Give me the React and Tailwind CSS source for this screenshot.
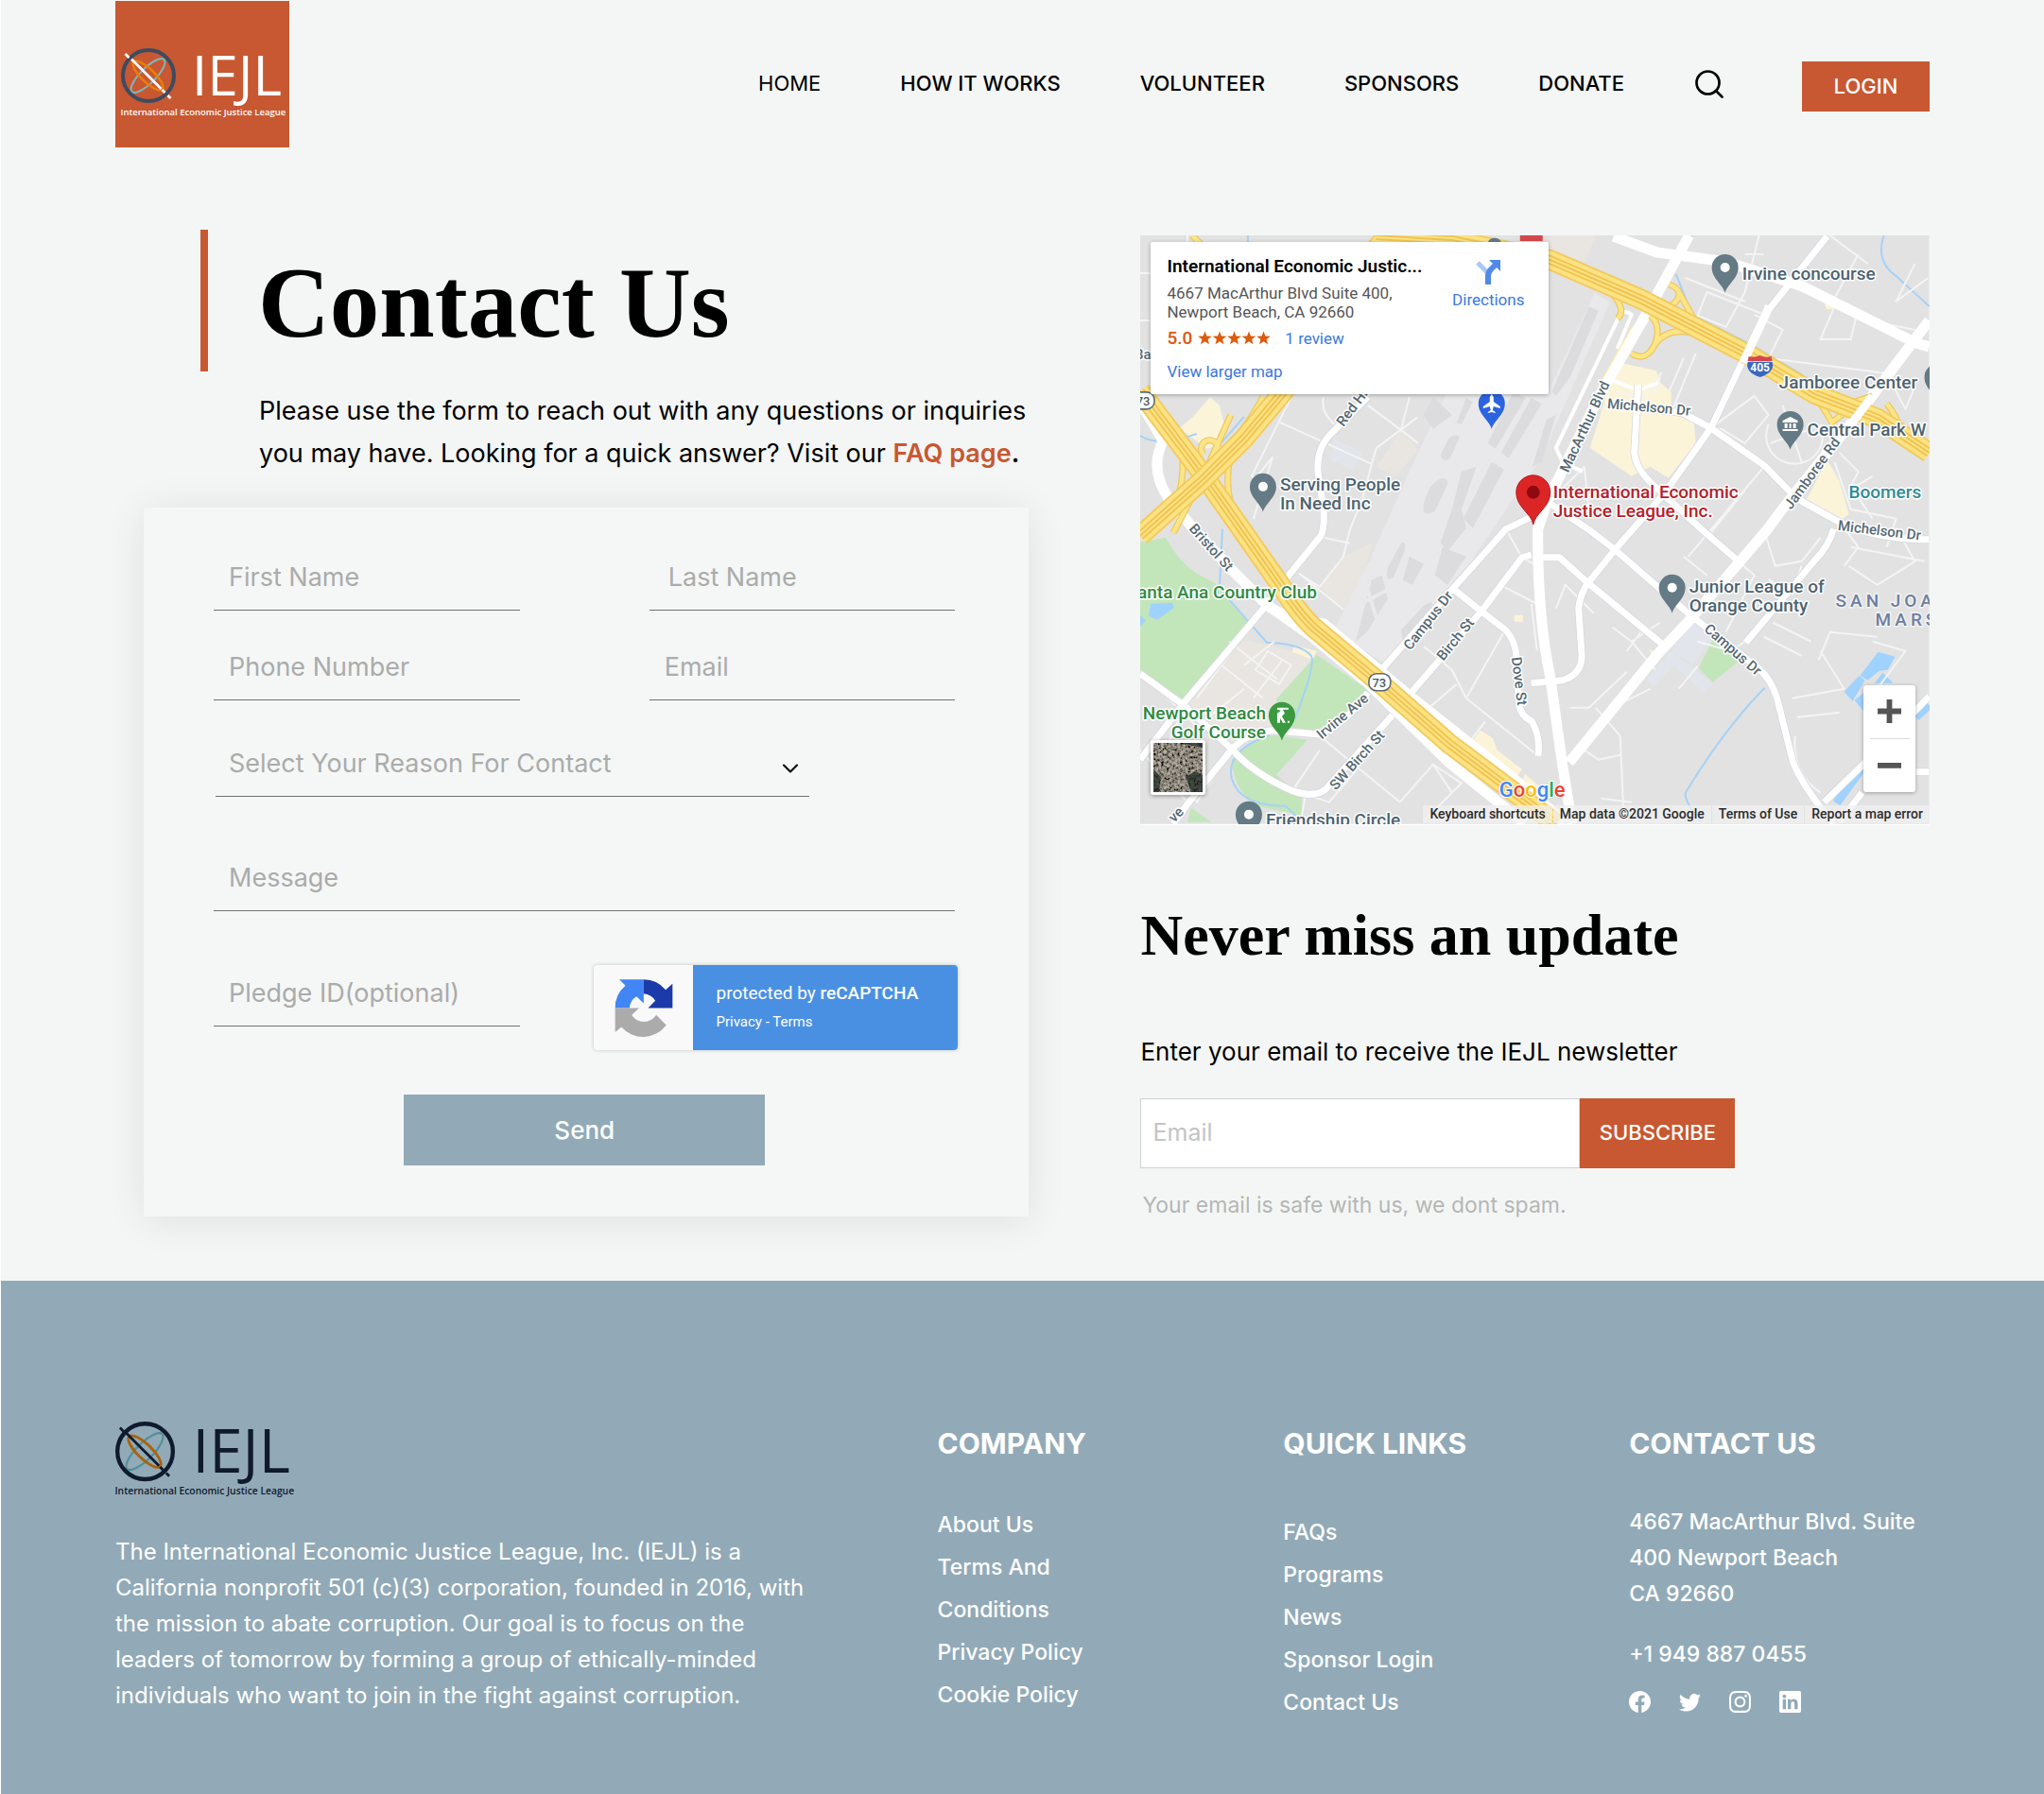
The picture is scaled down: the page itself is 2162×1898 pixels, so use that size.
import React from "react";
import { Search, ChevronDown } from "lucide-react";
import { BsFacebook, BsTwitter, BsInstagram, BsLinkedin } from "react-icons/bs";

const LIGHT_LOGO = { ring: "#3f4a5f", text: "#ffffff", bar: "#ffffff", orange: "#ea7c0c", teal: "#7fb6bf" };
const DARK_LOGO = { ring: "#101a2e", text: "#101a2e", bar: "#101a2e", orange: "#a8640a", teal: "#528f9b" };

function Logo({ colors, className }) {
  return (
    <svg viewBox="3 0 344 152" className={"overflow-visible " + className} role="img" aria-label="IEJL">
      <g fill="none" transform="scale(2)">
        <ellipse cx="30" cy="30" rx="24" ry="8" transform="rotate(-45 30 30)" stroke={colors.teal} strokeWidth="2" />
        <ellipse cx="30" cy="30" rx="21" ry="7" transform="rotate(44 30 30)" stroke={colors.orange} strokeWidth="2.6" />
        <path d="M12 12 L44 44" stroke={colors.bar} strokeWidth="2.6" />
        <circle cx="30.5" cy="30" r="27" stroke={colors.ring} strokeWidth="4" />
        <path d="M6 7 L10 11 M45 45 L48 48 M51 51 L54 54" stroke={colors.bar} strokeWidth="2.6" />
      </g>
      <text x="153" y="102" fontFamily="Open Sans, sans-serif" fontSize="117" fill={colors.text}>
        IEJL
      </text>
      <text x="2" y="144" fontFamily="Open Sans, sans-serif" fontSize="19" fontWeight="600" fill={colors.text}>
        International Economic Justice League
      </text>
    </svg>
  );
}

const NAV = ["HOME", "HOW IT WORKS", "VOLUNTEER", "SPONSORS", "DONATE"];

function Header() {
  return (
    <header className="flex h-[156px] items-start justify-between px-[121px]">
      <a href="#home" className="mt-px flex h-[155px] w-[184px] shrink-0 items-start justify-center bg-[#c75831] pt-[49px]">
        <Logo colors={LIGHT_LOGO} className="w-[172px]" />
      </a>
      <nav className="flex items-center gap-[84px] pt-[59px] text-[22px] leading-[53px] text-black">
        {NAV.map((item) => (
          <a key={item} href={"#" + item} className={item === "HOME" ? "font-normal" : "font-medium"}>
            {item}
          </a>
        ))}
        <button type="button" aria-label="Search" className="-ml-3">
          <Search size={36} strokeWidth={1.8} />
        </button>
        <button type="button" className="mt-[6px] -ml-1 h-[53px] w-[135px] bg-[#c75831] font-medium text-white">
          LOGIN
        </button>
      </nav>
    </header>
  );
}

function Field({ label, type = "text", indent = "pl-4" }) {
  return (
    <input
      type={type}
      aria-label={label}
      placeholder={label}
      className={
        "h-[70px] w-full min-w-0 border-b border-[#6f7272] bg-transparent text-[27px] text-black outline-none placeholder:text-[#ababab] " +
        indent
      }
    />
  );
}

function Recaptcha() {
  return (
    <div className="flex h-[90px] w-[385px] shrink-0 overflow-hidden rounded-[4px] bg-[#f9f9f9] font-[Roboto,sans-serif] shadow-[0_0_4px_rgba(0,0,0,0.2)]">
      <div className="flex w-[105px] items-center justify-center">
        <svg viewBox="0 0 187 187" className="w-[62px]" aria-hidden="true">
          <path d="M15 4H93V80L70 58A46 46 0 0 0 48 95H2A91 91 0 0 1 35 23Z" fill="#4285f4" />
          <path d="M93 4A91 91 0 0 1 163 37L185 17V95H107L130 72A46 46 0 0 0 93 49Z" fill="#1c3aa9" />
          <path d="M2 95H78L55 118A46 46 0 0 0 133 117L165 149A91 91 0 0 1 22 155L2 172Z" fill="#ababab" />
        </svg>
      </div>
      <div className="flex flex-1 flex-col justify-center bg-[#4a90e2] pl-6 text-white">
        <p className="text-[19px] leading-[30px]">
          protected by <span className="font-medium">reCAPTCHA</span>
        </p>
        <p className="text-[15px] leading-[30px]">
          <a href="#privacy">Privacy</a> - <a href="#terms">Terms</a>
        </p>
      </div>
    </div>
  );
}

function ContactForm() {
  return (
    <form
      onSubmit={(e) => e.preventDefault()}
      className="mt-[35px] bg-[#f5f7f6] pt-[39px] pr-[78px] pb-[54px] pl-[74px] shadow-[0_4px_40px_rgba(0,0,0,0.09)]"
    >
      <div className="grid grid-cols-2 gap-x-[137px] gap-y-[25px]">
        <Field label="First Name" />
        <Field label="Last Name" indent="pl-5" />
        <Field label="Phone Number" type="tel" />
        <Field label="Email" type="email" />
      </div>
      <div className="relative mt-[32px] ml-[2px] w-4/5">
        <select
          aria-label="Select Your Reason For Contact"
          className="h-[70px] w-full appearance-none border-b border-[#6f7272] bg-transparent pt-[2px] pl-[14px] text-[27px] text-[#ababab] outline-none"
        >
          <option>Select Your Reason For Contact</option>
        </select>
        <ChevronDown className="pointer-events-none absolute top-[26px] right-[6px] size-7" strokeWidth={1.8} />
      </div>
      <div className="mt-[51px]">
        <Field label="Message" />
      </div>
      <div className="mt-[52px] flex items-start justify-between">
        <div className="w-[324px]">
          <Field label="Pledge ID(optional)" />
        </div>
        <div className="-mr-[3px] pt-[5px]">
          <Recaptcha />
        </div>
      </div>
      <button type="submit" className="mx-auto mt-[47px] block h-[75px] w-[382px] bg-[#92aab7] text-[26px] font-medium text-white">
        Send
      </button>
    </form>
  );
}

const MINOR = [
  "M0 40H50M50 0L48 60M0 90H44M120 300L140 235L118 262M160 171L118 255L145 265M148 198L245 242M245 242L250 225L293 193M194 171Q190 190 212 205M241 180L276 206L294 220M276 206L285 171M245 242L235 280L222 311L215 340L190 372L168 358M168 358L215 396",
  "M194 320L222 326M94 430L145 470M80 450L130 490M97 440L60 490M110 455L142 430M150 450L120 490M135 440L160 455L147 475L122 460ZM47 498L20 560M0 545L50 600M97 544L60 600L30 560M20 480L60 520M60 520L110 480",
  "M195 534L275 600M230 565L200 600L175 592L170 620M161 588L190 545M300 435L330 460L345 490L420 550M345 490L385 420M335 475L300 505M330 590L310 560L275 600M310 560L340 580L300 620M365 515L330 560",
  "M387 311L404 341L420 350M381 370L420 390M414 390L420 440M434 281L470 245L475 290M554 274L594 311M604 204L650 170L665 190L640 220L615 205ZM575 130L560 165M588 125L561 190M650 84L680 100L665 130L790 146L810 184L820 160",
  "M661 84L600 60L590 85L620 97L640 60L655 0M577 45L640 70M640 20L660 20M720 110L735 75L758 85L752 110ZM733 70L760 20M760 88L820 100M661 244L580 340M640 270L600 320M694 278L650 330M504 165L530 172L548 160L551 145",
  "M740 230L760 250L750 270L775 255M735 240L752 290L800 300L790 330M752 265L775 300M665 200A30 30 0 1 0 720 200M680 180L700 240M667 220L710 205M741 304L760 330L745 350M660 311L672 350L700 345L720 320M752 330L830 345M800 310L820 345L780 370L750 350",
  "M500 415L520 430L545 460M520 430L550 410M455 500L475 500L515 462M482 500L508 530L512 621M470 545L485 555L508 550M488 596L520 600M590 456L570 480M480 400L450 370L440 395M575 340L600 360M660 425L700 445M720 440L745 480L690 490M718 450L730 420L780 425M775 430L810 440L780 480M695 510L740 505M693 530Q690 570 720 590M540 480L500 500M530 420L515 440M590 430L625 440L640 430",
  "M820 30L800 70L834 45M730 0L770 30M665 364L690 380L700 350M632 344L650 360L630 400L620 420M710 430L690 420L670 410",
];

const MAJOR = [
  "M414 298L387 311L331 374L257 458M331 374L361 398L387 418Q397 430 398 444L401 498Q404 510 414 514Q424 530 421 551",
  "M434 284L474 311L504 334L581 401L654 458Q668 470 674 490L691 558Q702 585 734 623",
  "M414 338L404 341L361 398L287 484M267 508L201 581Q190 598 161 588Q120 570 97 544L47 498L0 464",
  "M241 484Q215 520 187 528L141 524Q115 525 97 544L51 601L35 623",
  "M241 171L201 211Q187 225 188 250L194 290Q196 315 188 322L154 364L134 391L47 494L0 555",
  "M421 341H444L474 368L554 434M414 474L447 471Q470 464 467 440L464 395Q466 378 474 368L504 331L554 274L604 204L661 84L727 1",
  "M527 158L523 230Q524 248 547 268L594 311L632 344",
  "M734 311Q728 330 714 344L641 431",
  "M494 178L574 188L604 204L661 244L694 278L741 304Q780 322 835 322",
  "M724 600L764 561L835 488M740 621L764 590M821 568H835",
];

const WIDE = [
  "M581 0L537 81L487 168L431 281L421 311Q420 400 434 468L447 561L457 623",
  "M501 1L547 18L621 28L701 54L821 114L835 118",
  "M835 90L761 188L681 288L664 311L581 408L547 444L454 558",
  "M0 178Q15 200 24 218Q8 250 34 284L57 311L94 351L134 391L181 424L241 474L327 558L407 623",
  "M134 391Q150 405 194 411L281 484L394 574L450 621",
];

const FREEWAYS = [
  "M0 165L67 254L112 318L147 368Q170 404 187 418L254 474L327 538L411 601L440 623",
  "M262 0Q190 80 152 165L110 215L67 258L0 318",
  "M250 0L330 5L434 26L531 68L647 128L714 168L781 194L835 230",
];

const RAMPS =
  "M55 0L75 20M130 171Q115 200 85 235M67 232A9 9 0 1 1 80 232M96 190L67 254L35 315M45 225Q48 290 20 300M94 240Q88 290 112 310M500 62Q515 80 505 88M560 52Q580 60 562 75L548 70M570 60L588 92M540 85Q552 95 545 115Q535 135 520 125M545 115Q560 95 590 105M714 170Q725 185 732 198L745 188M781 188Q796 200 780 203M790 178Q800 190 806 208M745 180L775 170";

function MapPin({ x, y, color = "#647a85", children }) {
  return (
    <g transform={`translate(${x} ${y})`}>
      <path d="M0 27C-2 18-14 12-14 0A14 14 0 0 1 14 0C14 12 2 18 0 27Z" fill={color} />
      {children || <circle r="5" fill="#fff" />}
    </g>
  );
}

function PlaceLabel({ x, y, color = "#4d6370", anchor = "start", lines }) {
  return (
    <text
      fontSize="19"
      fontWeight="500"
      fill={color}
      stroke="#ffffff"
      strokeWidth="3"
      strokeLinejoin="round"
      paintOrder="stroke"
      textAnchor={anchor}
    >
      {lines.map((line, i) => (
        <tspan key={line} x={x} y={y + i * 20}>
          {line}
        </tspan>
      ))}
    </text>
  );
}

const STREETS = [
  ["Campus Dr", 286, 440, -52],
  ["Birch St", 321, 451, -51],
  ["Dove St", 393, 447, 83],
  ["Irvine Ave", 192, 534, -40],
  ["SW Birch St", 207, 588, -48],
  ["Bristol St", 51, 311, 48],
  ["Red Hill", 215, 203, -53],
  ["MacArthur Blvd", 453, 252, -65],
  ["Michelson Dr", 494, 183, 5],
  ["Michelson Dr", 738, 312, 7],
  ["Jamboree Rd", 689, 291, -54],
  ["Campus Dr", 596, 418, 41],
];

function RoadMap() {
  return (
    <svg viewBox="0 0 835 623" className="block w-full font-[Roboto,sans-serif]" role="img" aria-label="Map of Newport Beach">
      <rect width="835" height="623" fill="#e2e2e2" />
      <path d="M215 340L246 325L236 365L215 398L190 372ZM276 206L294 228L270 255L250 245ZM434 0H483L470 28L434 16ZM94 425L185 445L144 491L140 524L97 540L47 498Z" fill="#e9e5e0" />
      <path d="M481 61L497 71L425 235L350 345L257 452L205 418L240 350L285 250L325 165L432 165Z" fill="#e9e9eb" />
      <g fill="#dcdcde">
        <path d="M310 171L330 190L310 205L300 190ZM345 172L352 176L340 200L335 198ZM326 216Q334 208 338 214L328 236Q320 242 318 232ZM306 268Q320 250 326 262L312 292Q298 300 300 284ZM395 165L408 172L376 226L368 220ZM414 172L425 178L390 236L382 230ZM340 250L356 245L340 290L345 310L325 335L318 325L330 290ZM276 326Q282 322 280 334L268 362Q258 368 262 352ZM285 340L300 348L288 370L278 365ZM372 240L385 248L352 310L342 300ZM245 365L256 360L262 385L240 420L228 430ZM320 330L345 340L325 370L312 360ZM300 392L308 388L315 400L280 440L276 418Z" />
        <path d="M475 75L485 80L455 150L440 170L436 165ZM430 195L440 190L425 240L415 245Z" />
      </g>
      <path d="M236 360L250 405M262 375L225 395" stroke="#e9e9eb" strokeWidth="4" />
      <path d="M0 325L27 320Q40 345 60 358L84 371L94 388L116 411L46 494L0 459ZM187 444L241 481Q230 512 181 524L161 521L144 491ZM97 556Q110 535 141 529L177 534L144 571L171 594V614L124 604Q100 590 97 556ZM607 426L636 449L606 473L591 458ZM54 606L75 621H50Z" fill="#c2e6ba" />
      <path d="M504 134L546 143L551 156L562 166V188L586 198L588 220L559 257L540 245L520 255L476 225L487 190ZM74 171L84 180L89 200L86 220L71 226L41 204L56 192ZM163 434L187 440L182 449L161 441ZM727 238L740 260L750 295L738 305L705 280ZM360 524L373 532L378 545L404 565L395 578L350 538ZM724 70L736 72L733 78H726ZM396 402H405V409H396ZM539 438L545 441L541 445ZM407 570L430 590L425 620L400 590Z" fill="#fbf4d8" />
      <path d="M205 215L236 230L225 248L202 238ZM588 406L606 424L585 455L562 440ZM562 440L606 475L596 484L565 455L543 477L536 470Z" fill="#e2e5ec" />
      <path d="M11 390L34 389L36 394L18 407L9 403ZM0 402L6 408L0 414ZM781 441L799 446L791 460L782 461L770 471L762 466ZM761 466L767 471L754 493L745 483ZM786 463L797 474L777 474ZM756 492L766 484V504Z" fill="#9fd2ff" />
      <g fill="none" stroke="#a6d2f5" strokeWidth="2">
        <path d="M567 41L584 84L647 116L701 148M787 0Q778 28 800 43L835 75M585 1L574 22M661 479Q620 520 577 590Q576 600 594 621M87 311L84 374L134 431Q170 432 181 445Q186 455 164 511M137 529Q90 545 97 575Q105 604 154 604L170 620M0 212Q20 225 60 210M110 192L75 232M114 0V10M340 0L360 8M834 220L810 205" />
        <path d="M764 564L737 601M835 497L821 510" stroke="#9fd2ff" strokeWidth="9" />
      </g>
      <g fill="none" stroke="#f4f4f4" strokeWidth="2" strokeLinejoin="round">
        {MINOR.map((d) => (
          <path key={d} d={d} />
        ))}
      </g>
      <path d="M447 240L440 225L505 90Q510 76 520 84L505 120M447 240L468 250M501 154L527 164L548 156" fill="none" stroke="#fff" strokeWidth="4" />
      <path d="M522 96L488 156" stroke="#fbeeb0" strokeWidth="3" />
      <g fill="none" strokeLinejoin="round">
        <g stroke="#d5d7de" strokeWidth="8.5">
          {MAJOR.map((d) => (
            <path key={d} d={d} />
          ))}
        </g>
        <g stroke="#ffffff" strokeWidth="7">
          {MAJOR.map((d) => (
            <path key={d} d={d} />
          ))}
        </g>
        <g stroke="#ffffff" strokeWidth="11">
          {WIDE.map((d) => (
            <path key={d} d={d} />
          ))}
        </g>
        <path d={RAMPS} stroke="#eec65e" strokeWidth="7" />
        <path d={RAMPS} stroke="#fbe587" strokeWidth="4.6" />
        {FREEWAYS.map((d) => (
          <g key={d}>
            <path d={d} stroke="#f3cb5f" strokeWidth="22" />
            <path d={d} stroke="#fbe384" strokeWidth="18" />
            <path d={d} stroke="#f2c551" strokeWidth="10" />
            <path d={d} stroke="#fbe384" strokeWidth="6" />
            <path d={d} stroke="#efc356" strokeWidth="2" />
          </g>
        ))}
        <path d="M666 75L638 135M775 170L750 203" stroke="#fff" strokeWidth="9" />
      </g>

      <g fontSize="15" fontWeight="500" fill="#566873" stroke="#ffffff" strokeWidth="3" paintOrder="stroke" strokeLinejoin="round">
        {STREETS.map(([name, x, y, angle]) => (
          <text key={name + x} transform={`translate(${x} ${y}) rotate(${angle})`}>
            {name}
          </text>
        ))}
        <text x="-6" y="131">Ba</text>
        <text transform="translate(36 622) rotate(-45)">ve</text>
      </g>

      <g fontSize="13" fontWeight="500" fill="#4a5660" textAnchor="middle">
        <rect x="242" y="464" width="23" height="18" rx="8" fill="#fff" stroke="#5d6b74" strokeWidth="1.6" />
        <text x="253" y="478">73</text>
        <rect x="-8" y="166" width="23" height="18" rx="8" fill="#fff" stroke="#5d6b74" strokeWidth="1.6" />
        <text x="3" y="180">73</text>
      </g>
      <g transform="translate(642 127)">
        <path d="M1 7H27Q30 18 14 23Q-2 18 1 7Z" fill="#3a68c0" />
        <path d="M1 6L2 1Q8 3 14 0Q20 3 26 1L27 6Z" fill="#d5474b" />
        <text x="14" y="17" fontSize="12" fontWeight="700" fill="#fff" textAnchor="middle">
          405
        </text>
      </g>
      <rect x="402" y="0" width="24" height="6" fill="#d5474b" />
      <path d="M368 7A8 8 0 0 1 382 7Z" fill="#647a85" />

      <MapPin x={619} y={34} />
      <PlaceLabel x={637} y={47} lines={["Irvine concourse"]} />
      <MapPin x={130} y={266} />
      <PlaceLabel x={148} y={270} lines={["Serving People", "In Need Inc"]} />
      <MapPin x={372} y={178} color="#2c63e0">
        <path d="M0-10L2-7V-2L9 3V5L2 3L1 7L4 9V10L0 9L-4 10V9L-1 7L-2 3L-9 5V3L-2-2V-7Z" fill="#fff" />
      </MapPin>
      <MapPin x={844} y={150} />
      <PlaceLabel x={676} y={162} lines={["Jamboree Center"]} />
      <MapPin x={688} y={200}>
        <path d="M-8-4L0-8L8-4V-2H-8ZM-6-1H-3V4H-6ZM-1-1H1V4H-1ZM3-1H6V4H3ZM-8 5H8V7H-8Z" fill="#fff" />
      </MapPin>
      <PlaceLabel x={706} y={212} lines={["Central Park W"]} />
      <PlaceLabel x={750} y={278} color="#2f8a94" lines={["Boomers"]} />
      <MapPin x={563} y={373} />
      <PlaceLabel x={581} y={378} lines={["Junior League of", "Orange County"]} />
      <PlaceLabel x={187} y={384} color="#2f8a41" anchor="end" lines={["anta Ana Country Club"]} />
      <MapPin x={150} y={508} color="#3b9a3f">
        <path d="M-5-8H7V-6H1L3-2L0 1L4 8H1L-2 3V8H-5V-2L-1-5L-5-6ZM6 6H8V8H6Z" fill="#fff" />
      </MapPin>
      <PlaceLabel x={133} y={512} color="#2f8a41" anchor="end" lines={["Newport Beach", "Golf Course"]} />
      <MapPin x={115} y={613} />
      <PlaceLabel x={133} y={625} lines={["Friendship Circle"]} />
      <g fontSize="19" fontWeight="500" fill="#6d7f9f" letterSpacing="4" stroke="#f2f2f2" strokeWidth="3" paintOrder="stroke">
        <text x="736" y="393">SAN JOA</text>
        <text x="778" y="413">MARS</text>
      </g>

      <path d="M416 306C414 294 398 288 398 272A18 18 0 0 1 434 272C434 288 418 294 416 306Z" fill="#dc2626" stroke="#b3151b" />
      <circle cx="416" cy="272" r="7" fill="#8f0a10" />
      <PlaceLabel x={437} y={278} color="#b3202a" lines={["International Economic", "Justice League, Inc."]} />

      <text x="380" y="594" fontSize="22" fontWeight="500" stroke="#fff" strokeWidth="2" paintOrder="stroke">
        <tspan fill="#4285f4">G</tspan>
        <tspan fill="#ea4335">o</tspan>
        <tspan fill="#fbbc05">o</tspan>
        <tspan fill="#4285f4">g</tspan>
        <tspan fill="#34a853">l</tspan>
        <tspan fill="#ea4335">e</tspan>
      </text>
    </svg>
  );
}

function MapPanel() {
  return (
    <section aria-label="Map" className="relative mt-[6px] overflow-hidden border-b border-white font-[Roboto,sans-serif]">
      <RoadMap />
      <div className="absolute top-[7px] left-[11px] flex w-[421px] justify-between rounded-[2px] bg-white pt-[14px] pr-[26px] pb-[12px] pl-[17px] shadow-[0_1px_4px_rgba(0,0,0,0.3)]">
        <div>
          <h2 className="text-[19px] leading-6 font-semibold text-black">International Economic Justic...</h2>
          <p className="mt-[6px] text-[17px] leading-5 text-[#555]">
            4667 MacArthur Blvd Suite 400,
            <br />
            Newport Beach, CA 92660
          </p>
          <p className="mt-[6px] flex items-center leading-6">
            <span className="text-[19px] font-medium text-[#d9580f]">5.0</span>
            <svg viewBox="0 0 78 16" className="ml-[6px] w-[78px]" fill="#dd5a0c" aria-label="5 stars">
              {[0, 1, 2, 3, 4].map((i) => (
                <path
                  key={i}
                  transform={`translate(${i * 15.5} 0)`}
                  d="M7.5 0.5L9.4 5.6L14.8 5.8L10.6 9.1L12 14.3L7.5 11.3L3 14.3L4.4 9.1L0.2 5.8L5.6 5.6Z"
                />
              ))}
            </svg>
            <a href="#reviews" className="ml-[14px] text-[17px] text-[#3b78e0]">
              1 review
            </a>
          </p>
          <a href="#larger" className="mt-[11px] block text-[17px] leading-6 text-[#3b78e0]">
            View larger map
          </a>
        </div>
        <a href="#directions" className="flex flex-col items-center gap-[6px] pt-[5px] text-[17px] leading-5 text-[#3b78e0]">
          <svg viewBox="0 0 26 26" className="w-[26px]" aria-hidden="true">
            <path d="M2 3L12 13" stroke="#a9c8f5" strokeWidth="5" />
            <path d="M13 26V17Q13 13 16 10L21 5" fill="none" stroke="#5089e8" strokeWidth="6" />
            <path d="M14 0H26V12Z" fill="#5089e8" />
          </svg>
          Directions
        </a>
      </div>
      <button
        type="button"
        aria-label="Show satellite imagery"
        className="absolute bottom-[31px] left-[11px] size-[58px] overflow-hidden rounded-[3px] border-[3px] border-white shadow-[0_1px_4px_rgba(0,0,0,0.4)]"
      >
        <svg viewBox="0 0 52 52" className="block size-full" aria-hidden="true">
          <filter id="grain" x="0" y="0" width="100%" height="100%">
            <feTurbulence type="fractalNoise" baseFrequency="0.35" numOctaves="3" seed="4" />
            <feColorMatrix values="0.9 0 0 0 -.2  0.9 0 0 0 -.22  0.85 0 0 0 -.23  0 0 0 0 1" />
          </filter>
          <rect width="52" height="52" filter="url(#grain)" />
          <path d="M0 28L8 36L6 52H0ZM34 36L44 30L52 34V52H40ZM28 0H52V5Z" fill="#17241f" opacity="0.7" />
          <path d="M22 22L32 10M14 34L22 20" stroke="#b8b0a4" strokeWidth="2" opacity="0.6" />
        </svg>
      </button>
      <div className="absolute right-[15px] bottom-[34px] flex w-[55px] flex-col items-center rounded-[3px] bg-white shadow-[0_1px_4px_rgba(0,0,0,0.3)]">
        <button type="button" aria-label="Zoom in" className="flex h-[56px] w-full items-center justify-center">
          <svg viewBox="0 0 26 26" className="w-[25px]" fill="#555" aria-hidden="true">
            <path d="M10 0H16V10H26V16H16V26H10V16H0V10H10Z" />
          </svg>
        </button>
        <div className="h-px w-[42px] bg-[#dcdcdc]" />
        <button type="button" aria-label="Zoom out" className="flex h-[56px] w-full items-center justify-center">
          <svg viewBox="0 0 26 6" className="w-[25px]" fill="#555" aria-hidden="true">
            <path d="M0 0H26V6H0Z" />
          </svg>
        </button>
      </div>
      <div className="absolute right-0 bottom-px flex gap-px text-[14px] leading-[19px] font-medium text-[#2c2c2c]">
        {["Keyboard shortcuts", "Map data ©2021 Google", "Terms of Use", "Report a map error"].map((t) => (
          <a key={t} href="#map" className="bg-[#f0f0f0]/75 px-[7px]">
            {t}
          </a>
        ))}
      </div>
    </section>
  );
}

function Newsletter() {
  return (
    <section>
      <h2 className="mt-[80px] font-[Liberation_Serif,serif] text-[62px] leading-[72px] font-bold text-black">Never miss an update</h2>
      <p className="mt-[70px] text-[26px] leading-9 text-black">Enter your email to receive the IEJL newsletter</p>
      <form onSubmit={(e) => e.preventDefault()} className="mt-[31px] flex h-[74px]">
        <input
          type="email"
          aria-label="Email"
          placeholder="Email"
          className="w-[465px] border border-[#cfd1d1] bg-white pl-3 text-[25px] outline-none placeholder:text-[#c4c4c4]"
        />
        <button type="submit" className="w-[164px] bg-[#c75831] text-[22px] font-medium text-white">
          SUBSCRIBE
        </button>
      </form>
      <p className="mt-[24px] ml-[2px] text-[23px] leading-[30px] text-[#b5b6b6]">Your email is safe with us, we dont spam.</p>
    </section>
  );
}

function LinkColumn({ title, links, className }) {
  return (
    <nav aria-label={title} className="pt-[6px]">
      <h3 className="text-[30px] leading-9 font-bold">{title}</h3>
      <ul className={"w-[180px] text-[23px] leading-[45px] font-medium " + className}>
        {links.map((l) => (
          <li key={l}>
            <a href={"#" + l}>{l}</a>
          </li>
        ))}
      </ul>
    </nav>
  );
}

function Footer() {
  return (
    <footer className="grid grid-cols-[870fr_366fr_366fr_318fr] bg-[#92aab7] px-[121px] pt-[148px] pb-[85px] text-white">
      <div>
        <Logo colors={DARK_LOGO} className="w-[187px]" />
        <p className="mt-[38px] text-[24px] leading-[38px]">
          The International Economic Justice League, Inc. (IEJL) is a
          <br />
          California nonprofit 501 (c)(3) corporation, founded in 2016, with
          <br />
          the mission to abate corruption. Our goal is to focus on the
          <br />
          leaders of tomorrow by forming a group of ethically-minded
          <br />
          individuals who want to join in the fight against corruption.
        </p>
      </div>
      <LinkColumn
        title="COMPANY"
        className="mt-[46px]"
        links={["About Us", "Terms And Conditions", "Privacy Policy", "Cookie Policy"]}
      />
      <LinkColumn title="QUICK LINKS" className="mt-[54px]" links={["FAQs", "Programs", "News", "Sponsor Login", "Contact Us"]} />
      <div className="pt-[6px]">
        <h3 className="text-[30px] leading-9 font-bold">CONTACT US</h3>
        <address className="mt-[46px] text-[23px] leading-[38px] font-medium whitespace-nowrap not-italic">
          4667 MacArthur Blvd. Suite
          <br />
          400 Newport Beach
          <br />
          CA 92660
          <a href="tel:+19498870455" className="mt-[26px] block">
            +1 949 887 0455
          </a>
        </address>
        <div className="mt-[20px] flex gap-[30px] text-[23px]">
          <a href="#facebook" aria-label="Facebook">
            <BsFacebook />
          </a>
          <a href="#twitter" aria-label="Twitter">
            <BsTwitter />
          </a>
          <a href="#instagram" aria-label="Instagram">
            <BsInstagram />
          </a>
          <a href="#linkedin" aria-label="LinkedIn">
            <BsLinkedin />
          </a>
        </div>
      </div>
    </footer>
  );
}

export default function App() {
  return (
    <div className="border-l border-white bg-[#f4f6f5] font-[Inter,sans-serif]">
      <Header />
      <main className="grid grid-cols-[937fr_835fr] gap-[118px] pt-[87px] pr-[121px] pb-[65px] pl-[151px]">
        <section>
          <div className="ml-[60px] flex items-center gap-[53px]">
            <div className="h-[150px] w-2 bg-[#c75831]" />
            <h1 className="pt-1 font-[Liberation_Serif,serif] text-[105px] leading-none font-bold text-black">Contact Us</h1>
          </div>
          <p className="mt-[19px] ml-[122px] text-[27px] leading-[45px] whitespace-nowrap text-black">
            Please use the form to reach out with any questions or inquiries
            <br />
            you may have. Looking for a quick answer? Visit our{" "}
            <a href="#faq" className="font-semibold text-[#c75831]">
              FAQ page
            </a>
            <span className="font-semibold">.</span>
          </p>
          <ContactForm />
        </section>
        <div>
          <MapPanel />
          <Newsletter />
        </div>
      </main>
      <Footer />
    </div>
  );
}
